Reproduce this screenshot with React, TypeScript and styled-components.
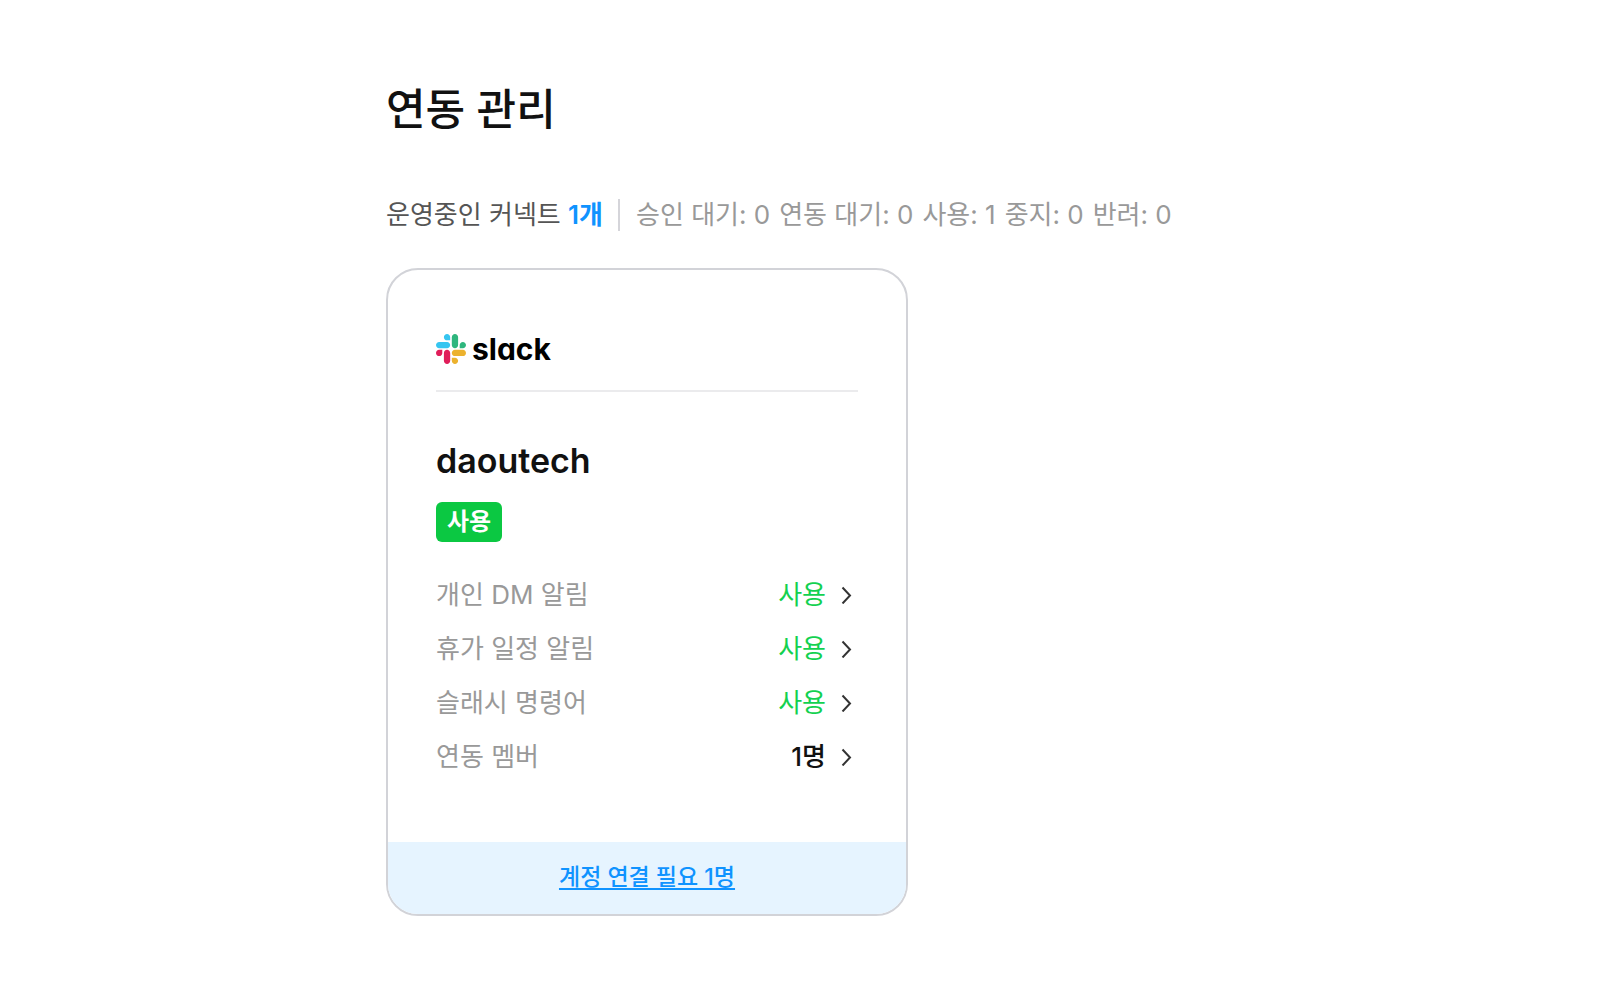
import React from 'react';
import styled, { createGlobalStyle } from 'styled-components';

const GlobalStyle = createGlobalStyle`
  *, *::before, *::after { box-sizing: border-box; }
  body {
    margin: 0;
    background: #fff;
    color: #111;
    font-family: Inter, "Noto Sans CJK KR", sans-serif;
  }
`;

const Page = styled.main`
  max-width: 828px;
  margin: 0 auto;
  padding: 77px 0 80px;
`;

const Title = styled.h1`
  margin: 0;
  font-size: 43px;
  font-weight: 500;
  line-height: 64px;
  color: #111;
`;

const Summary = styled.div`
  display: flex;
  align-items: center;
  margin-top: 56px;
  font-size: 26px;
  line-height: 36px;
  white-space: nowrap;
`;

const Operating = styled.p`
  margin: 0;
  color: #555;
`;

const Count = styled.strong`
  font-weight: 600;
  color: #0f93ff;
`;

const Stats = styled.ul`
  display: flex;
  gap: 9px;
  margin: 0 0 0 15px;
  padding: 0 0 0 16px;
  list-style: none;
  color: #999;
  border-left: 2px solid #d5d5da;
  line-height: 32px;
`;

const Card = styled.article`
  max-width: 522px;
  margin-top: 35px;
  border: 2px solid #d2d3d8;
  border-radius: 32px;
  overflow: hidden;
`;

const CardBody = styled.div`
  padding: 60px 48px 67px;
`;

const Brand = styled.div`
  display: flex;
  align-items: center;
  gap: 6px;
  height: 62px;
  padding-bottom: 22px;
  border-bottom: 2px solid #ebebed;
`;

const BrandName = styled.span`
  font-size: 30px;
  font-weight: 700;
  line-height: 36px;
  color: #000;
  font-feature-settings: "cv11";
`;

const Workspace = styled.h2`
  margin: 46px 0 18px;
  font-size: 34px;
  font-weight: 600;
  line-height: 46px;
  color: #111;
`;

const Badge = styled.span`
  display: block;
  width: fit-content;
  padding: 0 11px;
  border-radius: 6px;
  background: #0bc842;
  color: #fff;
  font-size: 24px;
  font-weight: 600;
  line-height: 40px;
`;

const Settings = styled.ul`
  display: grid;
  gap: 18px;
  margin: 35px 0 0;
  padding: 0;
  list-style: none;
`;

const Setting = styled.li`
  display: flex;
  align-items: center;
  justify-content: space-between;
  font-size: 26px;
  line-height: 36px;
  color: #999;
`;

const SettingButton = styled.button<{ $on?: boolean }>`
  display: flex;
  align-items: center;
  gap: 15px;
  padding: 0 6px 0 0;
  border: 0;
  background: none;
  font: inherit;
  font-weight: ${({ $on }) => ($on ? 400 : 500)};
  color: ${({ $on }) => ($on ? '#13d150' : '#111')};
  cursor: pointer;
`;

const CardFooter = styled.footer`
  padding: 17px 16px;
  background: #e6f4ff;
  text-align: center;
  line-height: 36px;
`;

const FooterLink = styled.a`
  font-size: 23px;
  font-weight: 500;
  color: #0f93ff;
  text-decoration: underline;
  text-decoration-thickness: 2px;
  text-underline-offset: 3px;
`;

const SlackMark = () => (
  <svg width="30" height="30" viewBox="0 0 122.8 122.8" aria-hidden="true">
    <path fill="#e01e5a" d="M25.8 77.6c0 7.1-5.8 12.9-12.9 12.9S0 84.7 0 77.6s5.8-12.9 12.9-12.9h12.9v12.9zm6.5 0c0-7.1 5.8-12.9 12.9-12.9s12.9 5.8 12.9 12.9v32.3c0 7.1-5.8 12.9-12.9 12.9s-12.9-5.8-12.9-12.9V77.6z" />
    <path fill="#36c5f0" d="M45.2 25.8c-7.1 0-12.9-5.8-12.9-12.9S38.1 0 45.2 0s12.9 5.8 12.9 12.9v12.9H45.2zm0 6.5c7.1 0 12.9 5.8 12.9 12.9s-5.8 12.9-12.9 12.9H12.9C5.8 58.1 0 52.3 0 45.2s5.8-12.9 12.9-12.9h32.3z" />
    <path fill="#2eb67d" d="M97 45.2c0-7.1 5.8-12.9 12.9-12.9s12.9 5.8 12.9 12.9-5.8 12.9-12.9 12.9H97V45.2zm-6.5 0c0 7.1-5.8 12.9-12.9 12.9s-12.9-5.8-12.9-12.9V12.9C64.7 5.8 70.5 0 77.6 0s12.9 5.8 12.9 12.9v32.3z" />
    <path fill="#ecb22e" d="M77.6 97c7.1 0 12.9 5.8 12.9 12.9s-5.8 12.9-12.9 12.9-12.9-5.8-12.9-12.9V97h12.9zm0-6.5c-7.1 0-12.9-5.8-12.9-12.9s5.8-12.9 12.9-12.9h32.3c7.1 0 12.9 5.8 12.9 12.9s-5.8 12.9-12.9 12.9H77.6z" />
  </svg>
);

const Chevron = () => (
  <svg width="11" height="18" viewBox="0 0 11 18" fill="none" stroke="#333" strokeWidth="2" aria-hidden="true">
    <path d="M1.5 1.5 9 9.5 1.5 17.5" />
  </svg>
);

const stats = ['승인 대기: 0', '연동 대기: 0', '사용: 1', '중지: 0', '반려: 0'];

const settings = [
  { label: '개인 DM 알림', value: '사용', on: true },
  { label: '휴가 일정 알림', value: '사용', on: true },
  { label: '슬래시 명령어', value: '사용', on: true },
  { label: '연동 멤버', value: '1명', on: false },
];

export default function App() {
  return (
    <>
      <GlobalStyle />
      <Page lang="ko">
        <Title>연동 관리</Title>
        <Summary>
          <Operating>
            운영중인 커넥트 <Count>1개</Count>
          </Operating>
          <Stats>
            {stats.map((stat) => (
              <li key={stat}>{stat}</li>
            ))}
          </Stats>
        </Summary>
        <Card>
          <CardBody>
            <Brand>
              <SlackMark />
              <BrandName>slack</BrandName>
            </Brand>
            <Workspace>daoutech</Workspace>
            <Badge>사용</Badge>
            <Settings>
              {settings.map(({ label, value, on }, i) => (
                <Setting key={label}>
                  <span id={`setting-${i}`}>{label}</span>
                  <SettingButton
                    type="button"
                    id={`setting-value-${i}`}
                    aria-labelledby={`setting-${i} setting-value-${i}`}
                    $on={on}
                  >
                    {value}
                    <Chevron />
                  </SettingButton>
                </Setting>
              ))}
            </Settings>
          </CardBody>
          <CardFooter>
            <FooterLink href="#members">계정 연결 필요 1명</FooterLink>
          </CardFooter>
        </Card>
      </Page>
    </>
  );
}
